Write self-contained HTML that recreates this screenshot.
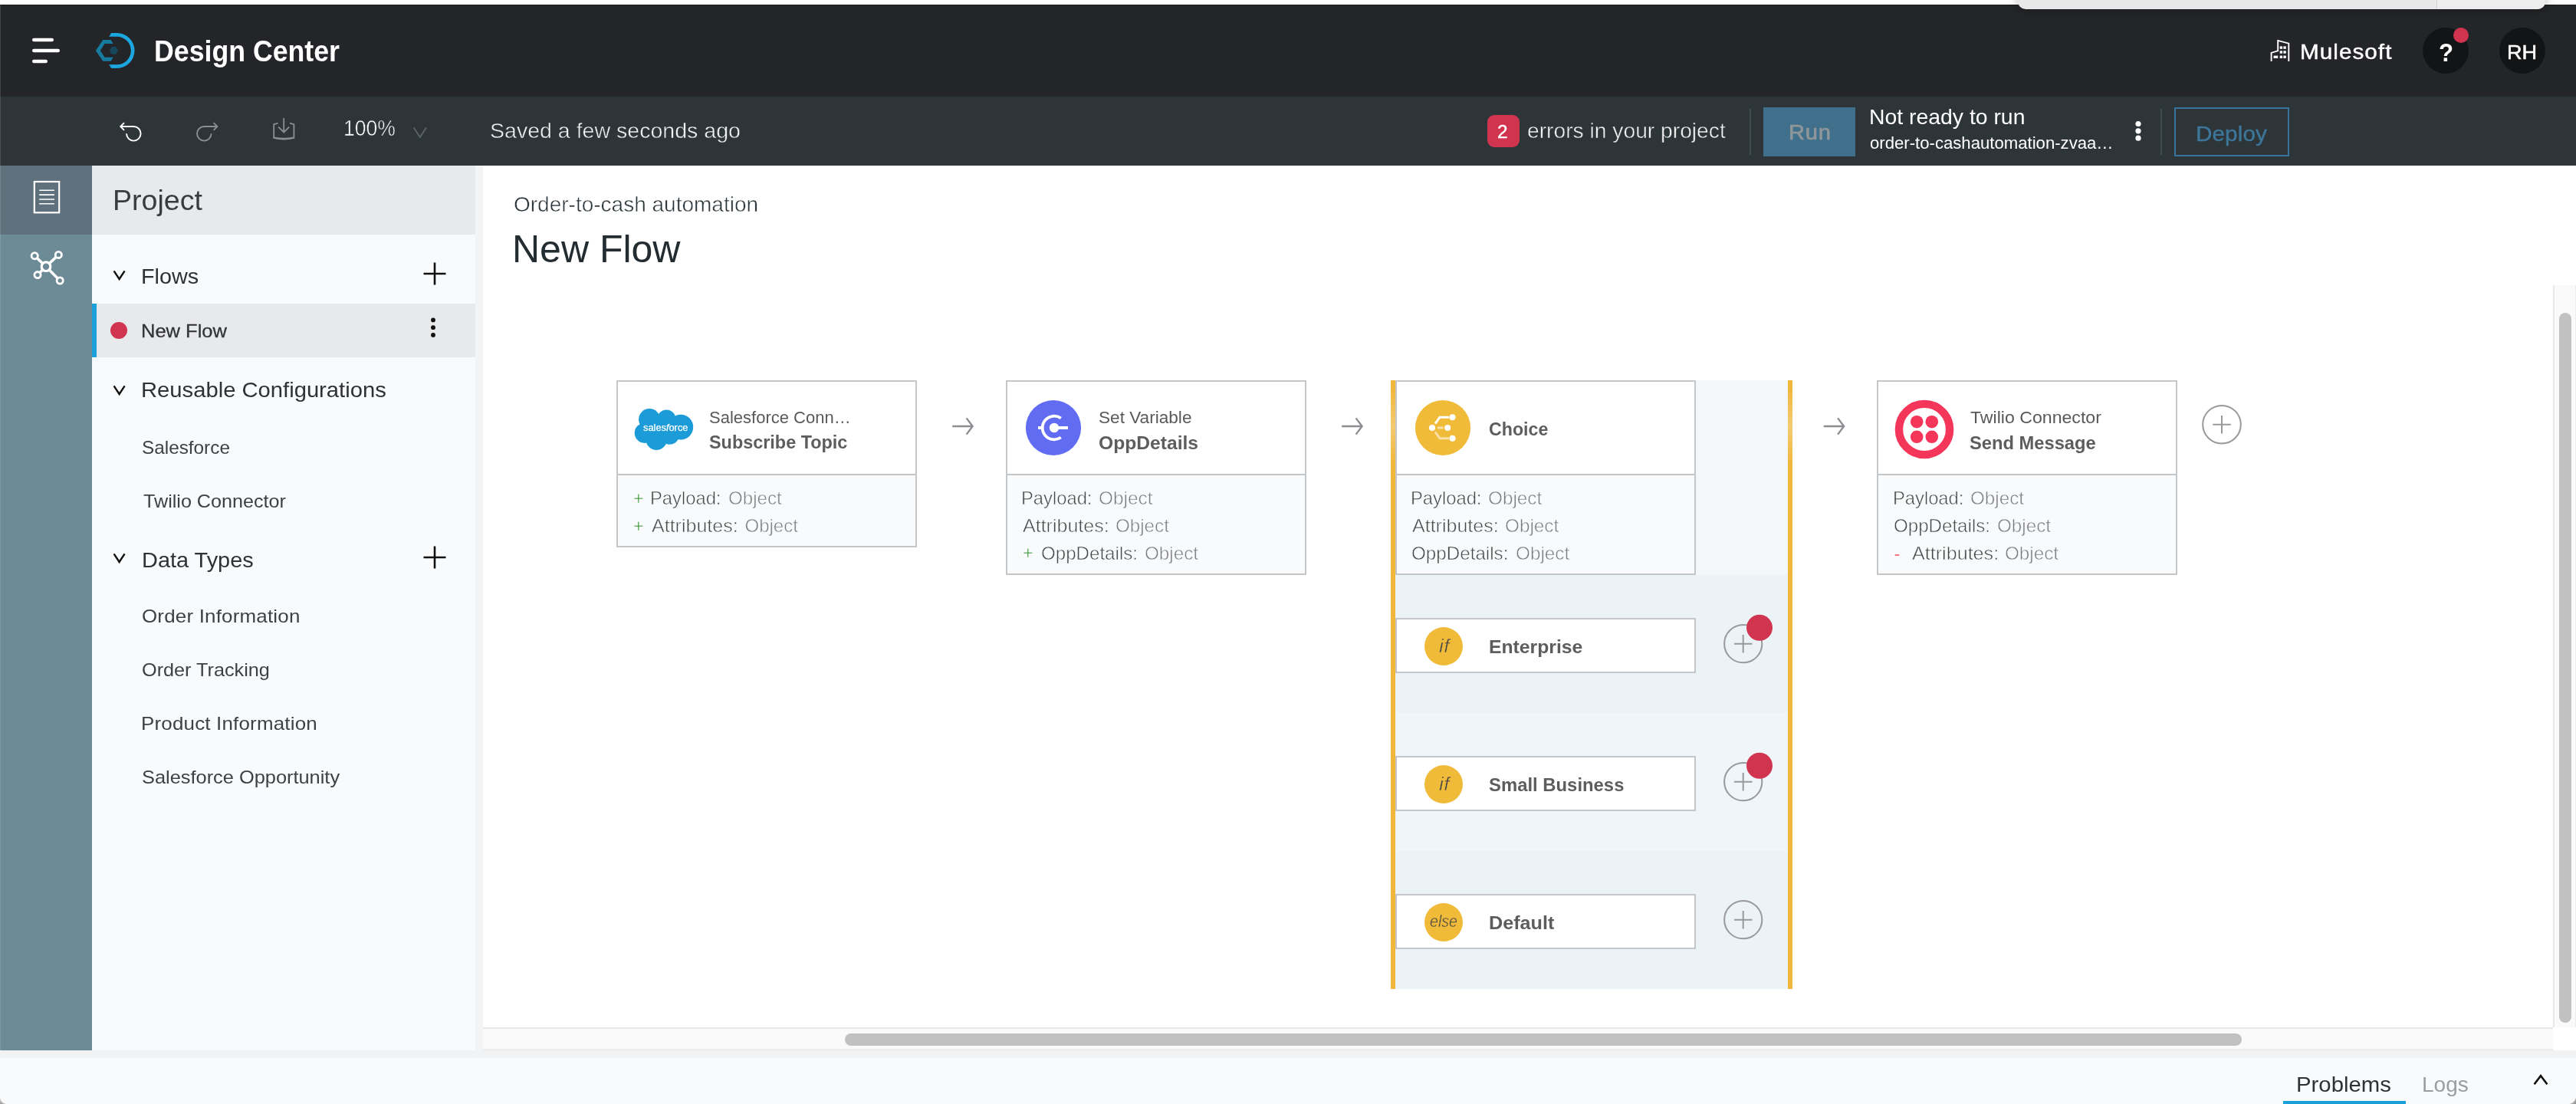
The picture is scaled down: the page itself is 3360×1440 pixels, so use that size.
<!DOCTYPE html>
<html lang="en"><head><meta charset="utf-8"><title>Design Center - New Flow</title>
<style>
html,body{margin:0;padding:0}
body{width:3360px;height:1440px;overflow:hidden;background:#fff;position:relative;font-family:"Liberation Sans",sans-serif}
.a{position:absolute;box-sizing:border-box}
.t{position:absolute;white-space:pre;transform-origin:0 0;margin:0}
.card{border:2px solid #c5c6c8;background:#f9fafb}
.card .hd{background:#fff;border-bottom:2px solid #c5c6c8}
.br{border:2px solid #c5c6c8;background:#fff}
.ic{position:absolute;border-radius:50%;background:#f1bb3a}
svg{position:absolute;left:0;top:0}
</style></head><body>

<!-- top chrome -->
<div class="a" style="left:0;top:6px;width:3360px;height:120px;background:#242528;border-top:1px solid #1a1b1d"></div>
<div class="a" style="left:2632px;top:-8px;width:688px;height:20px;background:#e8e8e8;border-radius:0 0 10px 10px;box-shadow:0 0 14px rgba(0,0,0,.30)"></div>
<div class="a" style="left:3178px;top:0;width:142px;height:12px;background:#ededed;border-left:1px solid #d2d2d2;border-radius:0 0 10px 0"></div>
<!-- toolbar -->
<div class="a" style="left:0;top:126px;width:3360px;height:90px;background:#2d3539"></div>
<div class="a" style="left:1940px;top:150px;width:42px;height:42px;border-radius:9px;background:#d1344f"></div>
<div class="a" style="left:2282px;top:142px;width:2px;height:60px;background:#3e4b53"></div>
<div class="a" style="left:2300px;top:140px;width:120px;height:64px;background:#40708c"></div>
<div class="a" style="left:2818px;top:142px;width:2px;height:60px;background:#3e4b53"></div>
<div class="a" style="left:2836px;top:140px;width:150px;height:64px;border:2px solid #3a7398"></div>
<!-- help / avatar -->
<div class="a" style="left:3160px;top:36px;width:60px;height:60px;border-radius:50%;background:#131415"></div>
<div class="a" style="left:3260px;top:36px;width:60px;height:60px;border-radius:50%;background:#131415"></div>
<div class="a" style="left:3200px;top:36px;width:20px;height:20px;border-radius:50%;background:#d1344f"></div>
<!-- left rail -->
<div class="a" style="left:0;top:216px;width:120px;height:1154px;background:#6d8a97"></div>
<div class="a" style="left:0;top:216px;width:120px;height:90px;background:#5f717c"></div>
<!-- sidebar -->
<div class="a" style="left:120px;top:216px;width:500px;height:1154px;background:#f9fafb"></div>
<div class="a" style="left:120px;top:216px;width:500px;height:90px;background:#e8e9eb"></div>
<div class="a" style="left:120px;top:396px;width:500px;height:70px;background:#e8e9eb;border-left:6px solid #1ba0db"></div>
<div class="a" style="left:144px;top:420px;width:22px;height:22px;border-radius:50%;background:#d1344f"></div>
<div class="a" style="left:620px;top:216px;width:10px;height:1154px;background:#f3f4f6"></div>
<!-- scrollbars -->
<div class="a" style="left:630px;top:1340px;width:2700px;height:30px;background:#fafafa;border-top:2px solid #e8e8e8;border-bottom:2px solid #ececec"></div>
<div class="a" style="left:1102px;top:1348px;width:1822px;height:16px;border-radius:8px;background:#c1c1c1"></div>
<div class="a" style="left:3330px;top:372px;width:30px;height:968px;background:#fafafa;border-left:2px solid #e8e8e8;border-right:1px solid #ececec"></div>
<div class="a" style="left:3338px;top:408px;width:16px;height:926px;border-radius:8px;background:#c1c1c1"></div>
<!-- bottom panel -->
<div class="a" style="left:0;top:1370px;width:3360px;height:10px;background:#f1f2f4"></div>
<div class="a" style="left:0;top:1380px;width:3360px;height:60px;background:#f9fafb"></div>
<div class="a" style="left:2978px;top:1436px;width:160px;height:4px;background:#1ba0db"></div>
<div class="a" style="left:3350px;top:1430px;width:10px;height:10px;background:radial-gradient(circle at 0 0,rgba(0,0,0,0) 9.5px,#a9a9a9 10.5px,#8a8a8a 14px)"></div>
<div class="a" style="left:0;top:1431px;width:9px;height:9px;background:radial-gradient(circle at 100% 0,rgba(0,0,0,0) 8.5px,#b5b5b5 9.5px,#8a8a8a 13px)"></div>
<div class="a" style="left:0;top:7px;width:1px;height:1433px;background:rgba(255,255,255,.13)"></div>
<!-- choice container -->
<div class="a" style="left:1820px;top:496px;width:512px;height:254px;background:#f3f7fa"></div>
<div class="a" style="left:1820px;top:750px;width:512px;height:180px;background:#ebf3f6"></div>
<div class="a" style="left:1820px;top:930px;width:512px;height:180px;background:#eff5f9"></div>
<div class="a" style="left:1820px;top:1110px;width:512px;height:180px;background:#ebf3f6"></div>
<div class="a" style="left:1814px;top:496px;width:6px;height:794px;background:#f0b73a"></div>
<div class="a" style="left:2332px;top:496px;width:6px;height:794px;background:#f0b73a"></div>
<div class="a" style="left:1814px;top:506px;width:6px;height:100px;background:linear-gradient(to bottom,rgba(255,255,255,0),rgba(255,255,255,.28),rgba(255,255,255,0))"></div>
<div class="a" style="left:2332px;top:506px;width:6px;height:100px;background:linear-gradient(to bottom,rgba(255,255,255,0),rgba(255,255,255,.28),rgba(255,255,255,0))"></div>
<!-- cards -->
<div class="a card" style="left:804px;top:496px;width:392px;height:218px"><div class="hd" style="height:120px"></div></div>
<div class="a card" style="left:1312px;top:496px;width:392px;height:254px"><div class="hd" style="height:120px"></div></div>
<div class="a card" style="left:1820px;top:496px;width:392px;height:254px"><div class="hd" style="height:120px"></div></div>
<div class="a card" style="left:2448px;top:496px;width:392px;height:254px"><div class="hd" style="height:120px"></div></div>
<div class="a br" style="left:1820px;top:806px;width:392px;height:72px"></div><div class="a br" style="left:1820px;top:986px;width:392px;height:72px"></div><div class="a br" style="left:1820px;top:1166px;width:392px;height:72px"></div>
<div class="ic" style="left:1858px;top:817.5px;width:50px;height:50px"></div>
<div class="ic" style="left:1858px;top:997.5px;width:50px;height:50px"></div>
<div class="ic" style="left:1858px;top:1177.5px;width:50px;height:50px"></div>
<svg width="3360" height="1440" viewBox="0 0 3360 1440">
<!-- hamburger -->
<path d="M44.2,52H67.8M44.2,66H75.8M44.2,80H59.8" stroke="#fff" stroke-width="4.4" stroke-linecap="round" fill="none"/>
<!-- logo -->
<path d="M145.2,43.07H152.54A22.96,22.96 0 0 1 152.54,88.99H145.2L142.2,84.3H152.54A18.1,18.1 0 0 0 152.54,47.75H142.2Z" fill="#1ba6e0"/>
<path d="M144.6,52.1L134.3,52.1L124.8,65.9L134.3,79.75L144.6,79.75L147.6,74.7L136.5,74.7L130.8,65.9L136.5,56.9L147.6,56.9Z" fill="#177a9f"/>
<path d="M143,65.9L145.7,61.1L151.2,61.1L154,65.9L151.2,70.7L145.7,70.7Z" fill="#16475c"/>
<!-- building -->
<g fill="none" stroke="#fff" stroke-width="1.9"><path d="M2971.2,67V52.9L2985.3,56.7V80"/><path d="M2971.8,66.2L2962.6,68.9V80"/></g><g fill="#fff"><rect x="2973.7" y="60.4" width="3.4" height="3.4"/><rect x="2978.4" y="60.4" width="3.4" height="3.4"/><rect x="2973.7" y="66.3" width="3.4" height="3.4"/><rect x="2978.4" y="66.3" width="3.4" height="3.4"/><rect x="2973.7" y="72.6" width="3.4" height="3.4"/><rect x="2978.4" y="72.6" width="3.4" height="3.4"/><rect x="2965.6" y="72.6" width="5.6" height="3.4"/></g>
<!-- help dot etc are divs -->
<!-- undo / redo / download -->
<g fill="none" stroke="#fff" stroke-width="1.9">
<path d="M157.4,165H174.3A9.3,9.3 0 1 1 165,174.3"/><path d="M162,160.2L157.2,165L162,169.8"/></g>
<g fill="none" stroke="#8b8f92" stroke-width="1.9">
<path d="M283.2,165H266.3A9.3,9.3 0 1 0 275.6,174.3"/><path d="M278.6,160.2L283.4,165L278.6,169.8"/></g>
<g fill="none" stroke="#8b8f92" stroke-width="1.8">
<path d="M370.2,154V172"/><path d="M363.2,165.6L370.2,172.4L377.2,165.6"/>
<path d="M362.6,160.6L357.2,162.2V180Q370.2,183.4 383.4,180V162.2L378,160.6"/></g>
<path d="M357.2,178.4Q370.2,181 383.4,178.4V180.4Q370.2,184 357.2,180.4Z" fill="#8b8f92"/>
<path d="M539.6,166.4L547.8,179L556,166.4" fill="none" stroke="#596166" stroke-width="2"/>
<!-- toolbar kebab -->
<g fill="#fff"><circle cx="2789" cy="161.5" r="3.6"/><circle cx="2789" cy="170.8" r="3.6"/><circle cx="2789" cy="180.2" r="3.6"/></g>
<!-- rail icons -->
<rect x="44.8" y="237" width="32.4" height="40.3" fill="none" stroke="#fff" stroke-width="2.2"/>
<path d="M51.2,248.3H70.9M51.2,254.1H70.9M51.2,260H70.9M51.2,265.7H70.9" stroke="#fff" stroke-width="1.6" fill="none"/>
<path d="M60,347.7L45.2,333.7" stroke="#fff" stroke-width="3.5" fill="none"/><path d="M60,347.7L76.3,332.4" stroke="#fff" stroke-width="3.5" fill="none"/><path d="M60,347.7L49,358.6" stroke="#fff" stroke-width="3.5" fill="none"/><path d="M60,347.7L78.2,366" stroke="#fff" stroke-width="3.5" fill="none"/><circle cx="45.2" cy="333.7" r="4.1" fill="#6d8a97" stroke="#fff" stroke-width="2.8"/><circle cx="76.3" cy="332.4" r="4.1" fill="#6d8a97" stroke="#fff" stroke-width="2.8"/><circle cx="49" cy="358.6" r="4.1" fill="#6d8a97" stroke="#fff" stroke-width="2.8"/><circle cx="78.2" cy="366" r="4.1" fill="#6d8a97" stroke="#fff" stroke-width="2.8"/><circle cx="60" cy="347.7" r="5.8" fill="#6d8a97" stroke="#fff" stroke-width="3.2"/>
<!-- sidebar icons -->
<path d="M148.6,353.4L155.6,364.0L162.6,353.4" fill="none" stroke="#111" stroke-width="2.4"/><path d="M148.6,503.4L155.6,514.0L162.6,503.4" fill="none" stroke="#111" stroke-width="2.4"/><path d="M148.6,722.4L155.6,733.0L162.6,722.4" fill="none" stroke="#111" stroke-width="2.4"/>
<path d="M552.5,357H581.5M567,342.5V371.5" fill="none" stroke="#111" stroke-width="2.6"/><path d="M552.5,727H581.5M567,712.5V741.5" fill="none" stroke="#111" stroke-width="2.6"/>
<g fill="#111"><circle cx="565" cy="417.4" r="2.9"/><circle cx="565" cy="427.2" r="2.9"/><circle cx="565" cy="437" r="2.9"/></g>
<!-- bottom chevron -->
<path d="M3305.6,1414.2L3314,1403.2L3322.4,1414.2" fill="none" stroke="#111" stroke-width="2.6"/>
<!-- flow arrows -->
<path d="M1242.2,556H1268.4M1260.6000000000001,545.4L1268.6000000000001,556L1260.6000000000001,566.6" fill="none" stroke="#8c8e91" stroke-width="2.4" stroke-linejoin="miter"/><path d="M1750.2,556H1776.4M1768.6000000000001,545.4L1776.6000000000001,556L1768.6000000000001,566.6" fill="none" stroke="#8c8e91" stroke-width="2.4" stroke-linejoin="miter"/><path d="M2378.7,556H2404.8999999999996M2397.1,545.4L2405.1,556L2397.1,566.6" fill="none" stroke="#8c8e91" stroke-width="2.4" stroke-linejoin="miter"/>
<!-- salesforce cloud -->
<circle cx="847.1" cy="547.1" r="14" fill="#1b9cd8"/><circle cx="869.3" cy="546.2" r="11.8" fill="#1b9cd8"/><circle cx="887.9" cy="557.1" r="16.3" fill="#1b9cd8"/><circle cx="840.8" cy="564.8" r="13.1" fill="#1b9cd8"/><circle cx="856.2" cy="573.4" r="13.6" fill="#1b9cd8"/><circle cx="873.4" cy="567" r="12.7" fill="#1b9cd8"/><circle cx="860" cy="558" r="14" fill="#1b9cd8"/>
<!-- set variable -->
<circle cx="1374" cy="558" r="36.1" fill="#626cf3"/>
<path d="M1383.8,545.5A15.3,15.3 0 1 0 1383.8,570.5" fill="none" stroke="#fff" stroke-width="3.8"/>
<circle cx="1375" cy="558" r="6.2" fill="#fff"/>
<rect x="1375" y="556" width="18" height="4" fill="#fff"/><rect x="1354" y="556" width="6" height="4" fill="#fff"/>
<!-- choice -->
<circle cx="1882" cy="558" r="36.1" fill="#f1bb3a"/>
<path d="M1872,552.6L1878,544.2H1890" fill="none" stroke="#fff" stroke-width="3"/>
<path d="M1872,563.4L1878,571.8H1890" fill="none" stroke="#fff" stroke-opacity=".55" stroke-width="3"/>
<path d="M1874.8,558H1882.6" fill="none" stroke="#fff" stroke-opacity=".55" stroke-width="3"/>
<g fill="#fff"><circle cx="1868" cy="558" r="4.1"/><circle cx="1888.2" cy="558" r="4"/><circle cx="1894.5" cy="544.2" r="4"/><circle cx="1894.5" cy="571.8" r="4"/></g>
<!-- twilio -->
<circle cx="2510" cy="560" r="33.1" fill="#fff" stroke="#f5365b" stroke-width="10.4"/>
<g fill="#f5365b"><circle cx="2500.2" cy="550.2" r="8.3"/><circle cx="2519.8" cy="550.2" r="8.3"/><circle cx="2500.2" cy="569.8" r="8.3"/><circle cx="2519.8" cy="569.8" r="8.3"/></g>
<!-- plus circles -->
<circle cx="2898" cy="553.7" r="24.8" fill="none" stroke="#98999b" stroke-width="2"/><path d="M2886.2,553.7H2909.8M2898,541.9000000000001V565.5" stroke="#98999b" stroke-width="2" fill="none"/>
<circle cx="2273.7" cy="839.7" r="24.6" fill="none" stroke="#98999b" stroke-width="2"/><path d="M2261.8999999999996,839.7H2285.5M2273.7,827.9000000000001V851.5" stroke="#98999b" stroke-width="2" fill="none"/><circle cx="2273.7" cy="1019.7" r="24.6" fill="none" stroke="#98999b" stroke-width="2"/><path d="M2261.8999999999996,1019.7H2285.5M2273.7,1007.9000000000001V1031.5" stroke="#98999b" stroke-width="2" fill="none"/><circle cx="2273.7" cy="1199.7" r="24.6" fill="none" stroke="#98999b" stroke-width="2"/><path d="M2261.8999999999996,1199.7H2285.5M2273.7,1187.9V1211.5" stroke="#98999b" stroke-width="2" fill="none"/>
<circle cx="2295" cy="818.8" r="17" fill="#d1344f"/><circle cx="2295" cy="998.8" r="17" fill="#d1344f"/>
</svg>

<!-- text -->
<div id="txt" style="position:absolute;left:0;top:0;width:3360px;height:1440px;will-change:transform">
<div class="t" style="left:200.67px;top:43.40px;font-size:39px;line-height:47px;color:#ffffff;font-weight:700;transform:scaleX(0.9153)">Design Center</div>
<div class="t" style="left:2999.84px;top:51.40px;font-size:27.5px;line-height:33px;color:#ffffff;-webkit-text-stroke:0.4px #ffffff;letter-spacing:0.944px;transform:scaleX(1.0800)">Mulesoft</div>
<div class="t" style="left:3180.56px;top:49.00px;font-size:33px;line-height:40px;color:#ffffff;font-weight:700;transform:scaleX(0.9444)">?</div>
<div class="t" style="left:3270.22px;top:53.40px;font-size:26px;line-height:31px;color:#ffffff;-webkit-text-stroke:0.5px #ffffff;transform:scaleX(1.0412)">RH</div>
<div class="t" style="left:448.20px;top:149.00px;font-size:29.5px;line-height:35px;color:#ffffff;-webkit-text-stroke:0.6px #2d3539;transform:scaleX(0.9000)">100%</div>
<div class="t" style="left:638.98px;top:153.60px;font-size:28px;line-height:34px;color:#f2f3f3;-webkit-text-stroke:0.5px #2d3539;transform:scaleX(1.0194)">Saved a few seconds ago</div>
<div class="t" style="left:1952.68px;top:157.40px;font-size:24px;line-height:29px;color:#ffffff;-webkit-text-stroke:0.4px #ffffff;transform:scaleX(1.0167)">2</div>
<div class="t" style="left:1992.49px;top:154.40px;font-size:28px;line-height:34px;color:#f2f3f3;-webkit-text-stroke:0.5px #2d3539;transform:scaleX(1.0078)">errors in your project</div>
<div class="t" style="left:2332.64px;top:157.20px;font-size:27px;line-height:32px;color:#8f979b;-webkit-text-stroke:0.6px #8f979b;letter-spacing:0.657px;transform:scaleX(1.0800)">Run</div>
<div class="t" style="left:2438.37px;top:136.40px;font-size:28px;line-height:34px;color:#ffffff;transform:scaleX(1.0132)">Not ready to run</div>
<div class="t" style="left:2438.99px;top:174.00px;font-size:22px;line-height:26px;color:#ffffff;transform:scaleX(1.0064)">order-to-cashautomation-zvaa…</div>
<div class="t" style="left:2863.74px;top:157.70px;font-size:27.5px;line-height:33px;color:#3d7699;-webkit-text-stroke:0.4px #3d7699;letter-spacing:0.070px;transform:scaleX(1.0800)">Deploy</div>
<div class="t" style="left:146.87px;top:240.30px;font-size:36px;line-height:43px;color:#3a3b3d;transform:scaleX(1.0440)">Project</div>
<div class="t" style="left:184.44px;top:343.50px;font-size:28px;line-height:34px;color:#303133;transform:scaleX(1.0286)">Flows</div>
<div class="t" style="left:184.38px;top:416.70px;font-size:24px;line-height:29px;color:#333436;-webkit-text-stroke:0.3px #333436;transform:scaleX(1.0625)">New Flow</div>
<div class="t" style="left:184.41px;top:491.80px;font-size:28px;line-height:34px;color:#303133;transform:scaleX(1.0428)">Reusable Configurations</div>
<div class="t" style="left:185.49px;top:569.00px;font-size:24px;line-height:29px;color:#3f4042;transform:scaleX(1.0134)">Salesforce</div>
<div class="t" style="left:186.50px;top:639.00px;font-size:24px;line-height:29px;color:#3f4042;transform:scaleX(1.0478)">Twilio Connector</div>
<div class="t" style="left:184.73px;top:713.80px;font-size:28px;line-height:34px;color:#303133;transform:scaleX(1.0326)">Data Types</div>
<div class="t" style="left:185.42px;top:788.80px;font-size:24px;line-height:29px;color:#3f4042;letter-spacing:0.186px;transform:scaleX(1.0800)">Order Information</div>
<div class="t" style="left:185.45px;top:858.60px;font-size:24px;line-height:29px;color:#3f4042;transform:scaleX(1.0513)">Order Tracking</div>
<div class="t" style="left:184.34px;top:928.70px;font-size:24px;line-height:29px;color:#3f4042;letter-spacing:0.181px;transform:scaleX(1.0800)">Product Information</div>
<div class="t" style="left:185.44px;top:998.80px;font-size:24px;line-height:29px;color:#3f4042;transform:scaleX(1.0572)">Salesforce Opportunity</div>
<div class="t" style="left:670.00px;top:250.20px;font-size:28px;line-height:34px;color:#2b3439;-webkit-text-stroke:0.5px #fff">Order-to-cash automation</div>
<div class="t" style="left:668.00px;top:295.00px;font-size:50px;line-height:60px;color:#232c31">New Flow</div>
<div class="t" style="left:838.50px;top:550.60px;font-size:12.6px;line-height:15px;color:#ffffff;-webkit-text-stroke:0.25px #ffffff;transform:scaleX(1.0175)">sales<i>f</i>orce</div>
<div class="t" style="left:925.00px;top:532.00px;font-size:22px;line-height:26px;color:#58595b">Salesforce Conn…</div>
<div class="t" style="left:925.02px;top:562.40px;font-size:24px;line-height:29px;color:#5c5d5f;font-weight:700;transform:scaleX(0.9754)">Subscribe Topic</div>
<div class="t" style="left:826.02px;top:634.60px;font-size:24px;line-height:29px;color:#2f962f;-webkit-text-stroke:0.45px #f9fafb;transform:scaleX(0.9750)">+</div>
<div class="t" style="left:848.42px;top:634.80px;font-size:24px;line-height:29px;color:#454647;-webkit-text-stroke:0.55px #f9fafb;transform:scaleX(0.9900)">Payload:</div>
<div class="t" style="left:949.70px;top:634.80px;font-size:24px;line-height:29px;color:#7b7c7e;-webkit-text-stroke:0.55px #f9fafb;transform:scaleX(1.0043)">Object</div>
<div class="t" style="left:826.02px;top:670.60px;font-size:24px;line-height:29px;color:#2f962f;-webkit-text-stroke:0.45px #f9fafb;transform:scaleX(0.9750)">+</div>
<div class="t" style="left:850.40px;top:670.80px;font-size:24px;line-height:29px;color:#454647;-webkit-text-stroke:0.55px #f9fafb;transform:scaleX(1.0434)">Attributes:</div>
<div class="t" style="left:971.50px;top:670.80px;font-size:24px;line-height:29px;color:#7b7c7e;-webkit-text-stroke:0.55px #f9fafb">Object</div>
<div class="t" style="left:1433.27px;top:531.50px;font-size:22px;line-height:26px;color:#58595b;transform:scaleX(1.0274)">Set Variable</div>
<div class="t" style="left:1433.27px;top:562.50px;font-size:24px;line-height:29px;color:#5c5d5f;font-weight:700;transform:scaleX(1.0264)">OppDetails</div>
<div class="t" style="left:1332.32px;top:634.60px;font-size:24px;line-height:29px;color:#454647;-webkit-text-stroke:0.55px #f9fafb;transform:scaleX(0.9900)">Payload:</div>
<div class="t" style="left:1433.28px;top:634.60px;font-size:24px;line-height:29px;color:#7b7c7e;-webkit-text-stroke:0.55px #f9fafb;transform:scaleX(1.0174)">Object</div>
<div class="t" style="left:1334.30px;top:670.60px;font-size:24px;line-height:29px;color:#454647;-webkit-text-stroke:0.55px #f9fafb;transform:scaleX(1.0434)">Attributes:</div>
<div class="t" style="left:1454.99px;top:670.60px;font-size:24px;line-height:29px;color:#7b7c7e;-webkit-text-stroke:0.55px #f9fafb;transform:scaleX(1.0072)">Object</div>
<div class="t" style="left:1333.53px;top:706.40px;font-size:24px;line-height:29px;color:#2f962f;-webkit-text-stroke:0.45px #f9fafb;transform:scaleX(0.9750)">+</div>
<div class="t" style="left:1357.80px;top:706.60px;font-size:24px;line-height:29px;color:#454647;-webkit-text-stroke:0.55px #f9fafb;transform:scaleX(1.0049)">OppDetails:</div>
<div class="t" style="left:1492.99px;top:706.60px;font-size:24px;line-height:29px;color:#7b7c7e;-webkit-text-stroke:0.55px #f9fafb;transform:scaleX(1.0101)">Object</div>
<div class="t" style="left:1941.73px;top:544.80px;font-size:24px;line-height:29px;color:#5c5d5f;font-weight:700;transform:scaleX(0.9658)">Choice</div>
<div class="t" style="left:1840.42px;top:634.60px;font-size:24px;line-height:29px;color:#454647;-webkit-text-stroke:0.55px #f9fafb;transform:scaleX(0.9900)">Payload:</div>
<div class="t" style="left:1941.39px;top:634.60px;font-size:24px;line-height:29px;color:#7b7c7e;-webkit-text-stroke:0.55px #f9fafb;transform:scaleX(1.0116)">Object</div>
<div class="t" style="left:1842.40px;top:670.60px;font-size:24px;line-height:29px;color:#454647;-webkit-text-stroke:0.55px #f9fafb;transform:scaleX(1.0434)">Attributes:</div>
<div class="t" style="left:1963.19px;top:670.60px;font-size:24px;line-height:29px;color:#7b7c7e;-webkit-text-stroke:0.55px #f9fafb;transform:scaleX(1.0116)">Object</div>
<div class="t" style="left:1841.39px;top:706.60px;font-size:24px;line-height:29px;color:#454647;-webkit-text-stroke:0.55px #f9fafb;transform:scaleX(1.0081)">OppDetails:</div>
<div class="t" style="left:1976.79px;top:706.60px;font-size:24px;line-height:29px;color:#7b7c7e;-webkit-text-stroke:0.55px #f9fafb;transform:scaleX(1.0116)">Object</div>
<div class="t" style="left:1877.00px;top:827.70px;font-size:24px;line-height:29px;color:#444;font-style:italic;-webkit-text-stroke:0.5px #f1bb3a;letter-spacing:0.352px;transform:scaleX(1.0800)">if</div>
<div class="t" style="left:1941.97px;top:829.00px;font-size:24px;line-height:29px;color:#5c5d5f;font-weight:700;transform:scaleX(1.0308)">Enterprise</div>
<div class="t" style="left:1877.00px;top:1007.70px;font-size:24px;line-height:29px;color:#444;font-style:italic;-webkit-text-stroke:0.5px #f1bb3a;letter-spacing:0.352px;transform:scaleX(1.0800)">if</div>
<div class="t" style="left:1942.01px;top:1009.00px;font-size:24px;line-height:29px;color:#5c5d5f;font-weight:700;transform:scaleX(0.9943)">Small Business</div>
<div class="t" style="left:1865.30px;top:1189.20px;font-size:22px;line-height:26px;color:#444;font-style:italic;-webkit-text-stroke:0.5px #f1bb3a;transform:scaleX(0.8900)">else</div>
<div class="t" style="left:1941.95px;top:1189.00px;font-size:24px;line-height:29px;color:#5c5d5f;font-weight:700;transform:scaleX(1.0500)">Default</div>
<div class="t" style="left:2570.00px;top:531.50px;font-size:22px;line-height:26px;color:#58595b;transform:scaleX(1.0509)">Twilio Connector</div>
<div class="t" style="left:2569.01px;top:562.50px;font-size:24px;line-height:29px;color:#5c5d5f;font-weight:700;transform:scaleX(0.9879)">Send Message</div>
<div class="t" style="left:2469.02px;top:634.60px;font-size:24px;line-height:29px;color:#454647;-webkit-text-stroke:0.55px #f9fafb;transform:scaleX(0.9889)">Payload:</div>
<div class="t" style="left:2569.59px;top:634.60px;font-size:24px;line-height:29px;color:#7b7c7e;-webkit-text-stroke:0.55px #f9fafb;transform:scaleX(1.0087)">Object</div>
<div class="t" style="left:2470.00px;top:670.60px;font-size:24px;line-height:29px;color:#454647;-webkit-text-stroke:0.55px #f9fafb;transform:scaleX(1.0049)">OppDetails:</div>
<div class="t" style="left:2604.99px;top:670.60px;font-size:24px;line-height:29px;color:#7b7c7e;-webkit-text-stroke:0.55px #f9fafb;transform:scaleX(1.0087)">Object</div>
<div class="t" style="left:2470.50px;top:706.60px;font-size:24px;line-height:29px;color:#e8303f;-webkit-text-stroke:0.4px #f9fafb">-</div>
<div class="t" style="left:2494.00px;top:706.60px;font-size:24px;line-height:29px;color:#454647;-webkit-text-stroke:0.55px #f9fafb;transform:scaleX(1.0472)">Attributes:</div>
<div class="t" style="left:2615.29px;top:706.60px;font-size:24px;line-height:29px;color:#7b7c7e;-webkit-text-stroke:0.55px #f9fafb;transform:scaleX(1.0101)">Object</div>
<div class="t" style="left:2995.30px;top:1398.00px;font-size:28px;line-height:34px;color:#303133;transform:scaleX(1.0483)">Problems</div>
<div class="t" style="left:3159.00px;top:1398.00px;font-size:28px;line-height:34px;color:#9c9d9f">Logs</div>
</div>
</body></html>
